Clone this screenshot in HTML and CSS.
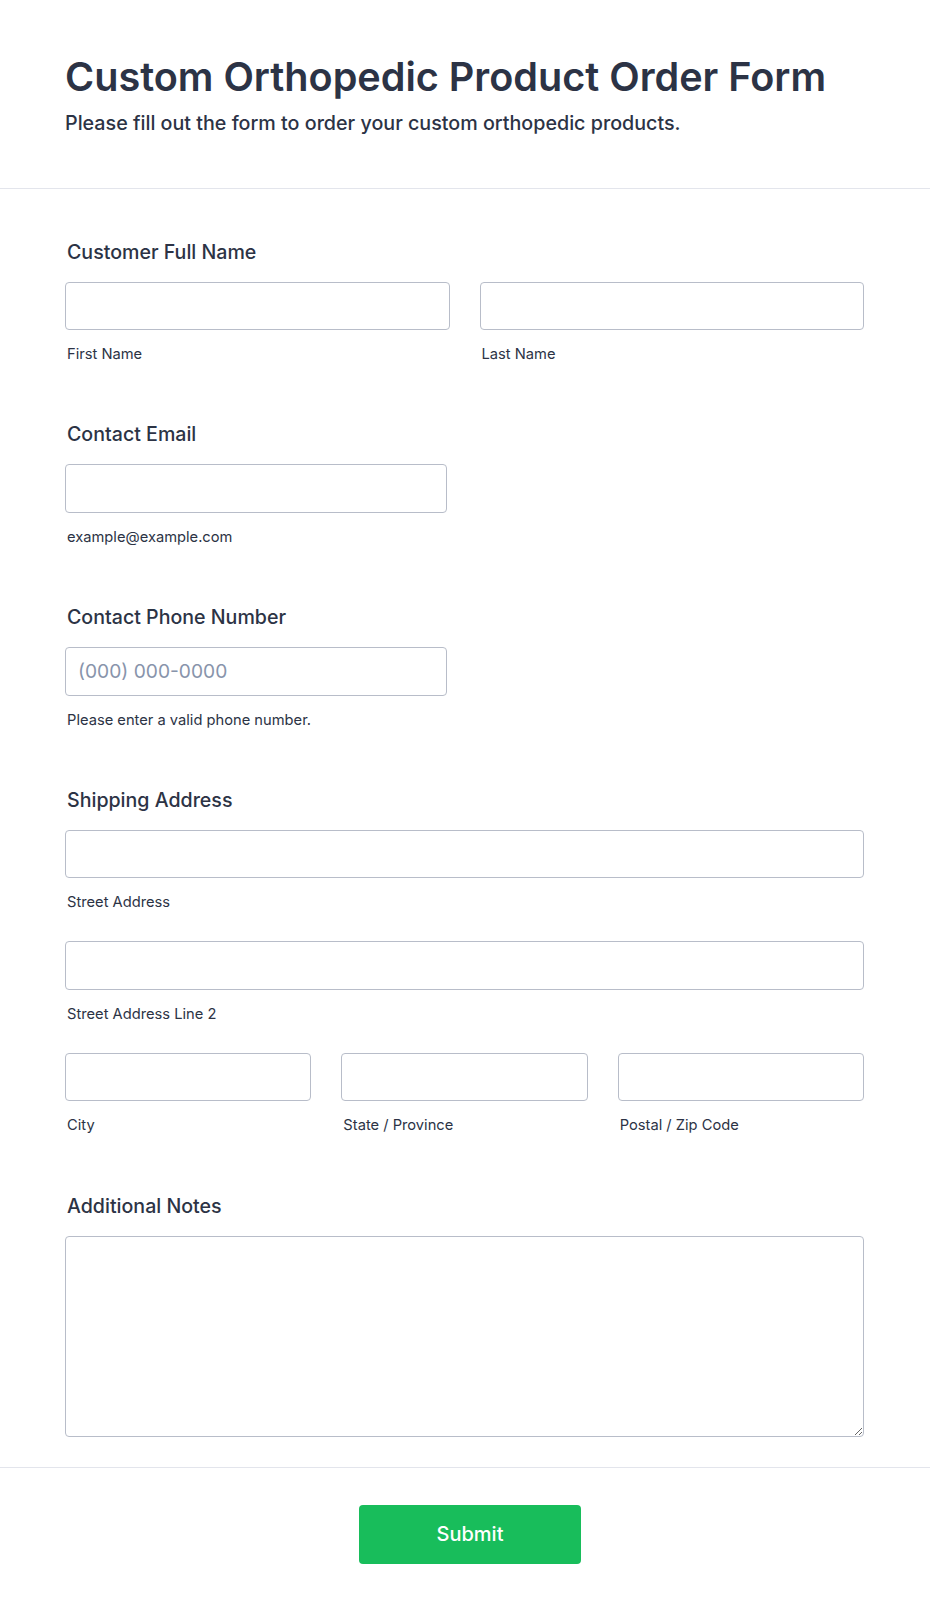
FILE: index.html
```html
<!DOCTYPE html>
<html lang="en">
<head>
<meta charset="utf-8">
<title>Custom Orthopedic Product Order Form</title>
<link rel="stylesheet" href="styles.css">
</head>
<body>
<form class="form">
  <header class="form-header">
    <h1 class="form-title">Custom Orthopedic Product Order Form</h1>
    <p class="form-subtitle">Please fill out the form to order your custom orthopedic products.</p>
  </header>

  <div class="form-body">
    <div class="field">
      <label class="field-label">Customer Full Name</label>
      <div class="row row-2">
        <div class="sub">
          <input class="input" type="text">
          <span class="sublabel">First Name</span>
        </div>
        <div class="sub">
          <input class="input" type="text">
          <span class="sublabel">Last Name</span>
        </div>
      </div>
    </div>

    <div class="field">
      <label class="field-label">Contact Email</label>
      <div class="sub half">
        <input class="input" type="email">
        <span class="sublabel">example@example.com</span>
      </div>
    </div>

    <div class="field">
      <label class="field-label">Contact Phone Number</label>
      <div class="sub half">
        <input class="input" type="tel" placeholder="(000) 000-0000">
        <span class="sublabel">Please enter a valid phone number.</span>
      </div>
    </div>

    <div class="field">
      <label class="field-label">Shipping Address</label>
      <div class="address">
        <div class="sub">
          <input class="input" type="text">
          <span class="sublabel">Street Address</span>
        </div>
        <div class="sub">
          <input class="input" type="text">
          <span class="sublabel">Street Address Line 2</span>
        </div>
        <div class="row row-3">
          <div class="sub">
            <input class="input" type="text">
            <span class="sublabel">City</span>
          </div>
          <div class="sub">
            <input class="input" type="text">
            <span class="sublabel">State / Province</span>
          </div>
          <div class="sub">
            <input class="input" type="text">
            <span class="sublabel">Postal / Zip Code</span>
          </div>
        </div>
      </div>
    </div>

    <div class="field field-notes">
      <label class="field-label">Additional Notes</label>
      <textarea class="textarea"></textarea>
    </div>
  </div>

  <footer class="form-footer">
    <button class="submit" type="button">Submit</button>
  </footer>
</form>
</body>
</html>
```

FILE: styles.css
```css
* {
  box-sizing: border-box;
}

html, body {
  margin: 0;
  padding: 0;
  background: #ffffff;
}

body {
  font-family: Inter, "Noto Sans", "Liberation Sans", sans-serif;
  color: #2c3345;
}

.form {
  width: 930px;
  margin: 0;
}

.form-header {
  padding: 53px 65px 53px 65px;
  border-bottom: 1px solid #e3e5ec;
}

.form-title {
  margin: 0;
  font-size: 39.6px;
  line-height: 48px;
  font-weight: 600;
  color: #2c3345;
  letter-spacing: 0;
}

.form-subtitle {
  margin: 10px 0 0 0;
  font-size: 19.7px;
  line-height: 24px;
  font-weight: 500;
  color: #2c3345;
}

.form-body {
  padding: 50.5px 66px 30px 65px;
  display: flex;
  flex-direction: column;
  gap: 59.3px;
  border-bottom: 1px solid #e3e5ec;
}

.field {
  display: flex;
  flex-direction: column;
}

.field-label {
  display: block;
  padding-left: 2px;
  font-size: 19.6px;
  line-height: 24px;
  font-weight: 500;
  color: #2c3345;
  margin-bottom: 18px;
}

.row {
  display: grid;
  column-gap: 30px;
}

.row-2 {
  grid-template-columns: 1fr 1fr;
}

.row-3 {
  grid-template-columns: 1fr 1fr 1fr;
}

.sub {
  display: flex;
  flex-direction: column;
}

.half {
  width: 382px;
}

.address {
  display: flex;
  flex-direction: column;
  gap: 30px;
}

.input {
  display: block;
  width: 100%;
  height: 48.5px;
  border: 1px solid #b8bdc9;
  border-radius: 4px;
  background: #ffffff;
  padding: 0 12px;
  font-family: Inter, "Noto Sans", "Liberation Sans", sans-serif;
  font-size: 19.2px;
  color: #2c3345;
  outline: none;
}

.input::placeholder {
  color: #8894ab;
}

.sublabel {
  display: block;
  margin-top: 15px;
  padding-left: 2px;
  font-size: 14.7px;
  line-height: 18px;
  color: #2c3345;
}

.textarea {
  display: block;
  width: 100%;
  height: 201px;
  border: 1px solid #b8bdc9;
  border-radius: 4px;
  background: #ffffff;
  padding: 12px;
  font-family: Inter, "Noto Sans", "Liberation Sans", sans-serif;
  font-size: 16px;
  color: #2c3345;
  outline: none;
  margin: 0;
}

.form-footer {
  display: flex;
  justify-content: center;
  padding: 37px 0 50px 10px;
}

.submit {
  width: 222px;
  height: 59px;
  border: none;
  border-radius: 4px;
  background: #18bd5b;
  color: #ffffff;
  font-family: Inter, "Noto Sans", "Liberation Sans", sans-serif;
  font-size: 20px;
  font-weight: 500;
  cursor: pointer;
}
```
